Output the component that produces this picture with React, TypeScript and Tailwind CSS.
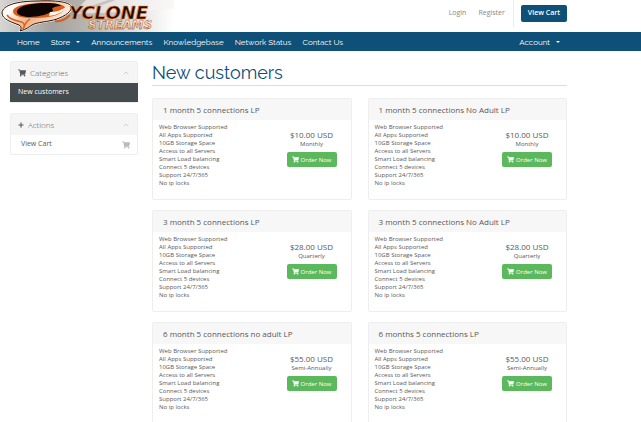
import { FaPlus, FaShoppingCart } from "react-icons/fa";
import { ChevronUp } from "lucide-react";

const features = [
  "Web Browser Supported",
  "All Apps Supported",
  "10GB Storage Space",
  "Access to all Servers",
  "Smart Load balancing",
  "Connect 5 devices",
  "Support 24/7/365",
  "No ip locks",
];

const products = [
  { name: "1 month 5 connections LP", price: "$10.00 USD", cycle: "Monthly" },
  { name: "1 month 5 connections No Adult LP", price: "$10.00 USD", cycle: "Monthly" },
  { name: "3 month 5 connections LP", price: "$28.00 USD", cycle: "Quarterly" },
  { name: "3 month 5 connections No Adult LP", price: "$28.00 USD", cycle: "Quarterly" },
  { name: "6 month 5 connections no adult LP", price: "$55.00 USD", cycle: "Semi-Annually" },
  { name: "6 months 5 connections LP", price: "$55.00 USD", cycle: "Semi-Annually" },
];

function Caret() {
  return <span className="ml-[6px] inline-block border-x-2 border-t-2 border-x-transparent border-t-white align-middle" />;
}

function Logo() {
  return (
    <svg viewBox="0 0 174 32" className="block h-8 w-[174px]" role="img" aria-label="Cyclone Streams">
      <defs>
        <linearGradient id="sky" x1="0" x2="1">
          <stop offset="0" stopColor="#d8d6d3" />
          <stop offset="0.3" stopColor="#a5a19d" />
          <stop offset="0.55" stopColor="#bdb9b5" />
          <stop offset="0.8" stopColor="#e6e4e2" />
          <stop offset="1" stopColor="#ffffff" />
        </linearGradient>
        <linearGradient id="fire" x1="0" x2="1" y1="0" y2="0.4">
          <stop offset="0" stopColor="#f7d9c2" />
          <stop offset="0.2" stopColor="#ffffff" />
          <stop offset="0.55" stopColor="#f3b083" />
          <stop offset="1" stopColor="#fff4ea" />
        </linearGradient>
        <linearGradient id="gold" x1="0" x2="0" y1="0" y2="1">
          <stop offset="0" stopColor="#fffdf8" />
          <stop offset="1" stopColor="#f0a45f" />
        </linearGradient>
      </defs>
      <rect width="174" height="32" fill="url(#sky)" />
      <path d="M86 0h88v9L100 13 72 14z" fill="#f6f4f2" opacity="0.65" />
      <path d="M108 0l8 0-42 15-6-1z" fill="#8f8a86" opacity="0.35" />
      <path
        d="M2 13C2 5 18 1 38 1c17-1 31 1 33 5 2 5-6 10-14 13-9 3-20 3-25 6-3 2-5 4-12 6 1-2 2-4-1-6C11 22 2 19 2 13z"
        fill="url(#fire)"
        stroke="#ffffff"
        strokeWidth="2"
      />
      <path
        d="M2 13C2 5 18 1 38 1c17-1 31 1 33 5 2 5-6 10-14 13-9 3-20 3-25 6-3 2-5 4-12 6 1-2 2-4-1-6C11 22 2 19 2 13z"
        fill="url(#fire)"
        stroke="#2b1208"
        strokeWidth="1"
      />
      <path d="M13 11c1-6 18-8 31-8 12 0 22 2 21 5-1 4-8 8-17 9-13 2-36 2-35-6z" fill="#d95c19" />
      <path d="M17 11c2-6 17-8 29-8 9 0 14 1 15 3-4 0-8 1-9 3 2 1 1 3-3 4-6 3-15 4-22 4-7-1-11-3-10-6z" fill="#0d0503" />
      <path d="M50 12c6 0 12-2 16-5-2 5-9 8-17 9z" fill="#fff6ee" />
      <path d="M7 15c3 5 10 6 15 7 3 2 3 4 1 7M30 19c-3 2-5 4-6 8" fill="none" stroke="#d95c19" strokeWidth="1.5" />
      <path d="M55 21c6 1 11-2 15-6" fill="none" stroke="#d95c19" strokeWidth="2" />
      <g fontFamily="DejaVu Sans" fontWeight="bold" fontStyle="italic">
        <text x="69" y="19" fontSize="18" fill="#1a0b05" stroke="#f08a43" strokeWidth="0.7">
          YCLONE
        </text>
        <text x="88" y="29" fontSize="12" fill="url(#gold)" stroke="#8a3b12" strokeWidth="0.4">
          STREAMS
        </text>
      </g>
    </svg>
  );
}

export default function App() {
  return (
    <div className="min-h-screen bg-white font-['Open_Sans',sans-serif] text-[#58595b]">
      <header className="flex h-8 items-start justify-between pr-[74px]">
        <a href="#home">
          <Logo />
        </a>
        <div className="flex items-center text-[7px] text-[#888]">
          <a href="#login" className="mr-3">Login</a>
          <a href="#register" className="mr-2">Register</a>
          <div className="border-l border-[#eee] py-[5px] pl-[7px]">
            <button className="block h-[17px] rounded-xs bg-[#0e5077] px-[7px] text-[7px] font-semibold text-white">
              View Cart
            </button>
          </div>
        </div>
      </header>

      <nav className="flex h-[19px] items-center gap-[11px] bg-[#0e5077] pr-[81px] pl-[17px] font-[Raleway,Lato,sans-serif] text-[8px] text-white">
        <a href="#home">Home</a>
        <a href="#store">Store<Caret /></a>
        <a href="#announcements">Announcements</a>
        <a href="#knowledgebase">Knowledgebase</a>
        <a href="#status">Network Status</a>
        <a href="#contact">Contact Us</a>
        <a href="#account" className="ml-auto">Account<Caret /></a>
      </nav>

      <div className="flex items-start gap-[14px] pt-[10px] pr-[74px] pl-[10px]">
        <aside className="flex w-[128px] shrink-0 flex-col gap-[10px]">
          <section className="rounded-xs border border-[#eee]">
            <h2 className="flex h-[21px] items-center bg-[#f5f5f5] px-[7px] text-[8px] font-light">
              <FaShoppingCart className="mr-1 size-2" />
              Categories
              <ChevronUp className="ml-auto size-2 text-[#bbb]" />
            </h2>
            <a href="#new" className="-mx-px flex h-[19px] items-center bg-[#434b4e] px-2 text-[7px] text-white">
              New customers
            </a>
          </section>
          <section className="rounded-xs border border-[#eee]">
            <h2 className="flex h-[21px] items-center bg-[#f5f5f5] px-[7px] text-[8px] font-light">
              <FaPlus className="mr-1 size-[6px]" />
              Actions
              <ChevronUp className="ml-auto size-2 text-[#bbb]" />
            </h2>
            <a href="#cart" className="flex h-[19px] items-center pr-[7px] pl-[10px] text-[7px]">
              View Cart
              <FaShoppingCart className="ml-auto size-2 text-[#bbb]" />
            </a>
          </section>
        </aside>

        <main className="min-w-0 flex-1">
          <h1 className="mb-3 h-[25px] border-b border-[#ddd] font-[Raleway,Lato,sans-serif] text-[18px] leading-[24px] text-[#0e5077]">
            New customers
          </h1>
          <div className="grid grid-cols-2 gap-x-4 gap-y-[10px]">
            {products.map((p) => (
              <article key={p.name} className="rounded-xs border border-[#eee]">
                <h3 className="h-[21px] bg-[#f7f7f7] px-[10px] text-[8px] leading-[21px]">{p.name}</h3>
                <div className="flex h-[79px] justify-between pt-[3px] pr-[14px] pl-[6px]">
                  <ul className="text-[6px] leading-[8px]">
                    {features.map((f) => (
                      <li key={f}>{f}</li>
                    ))}
                  </ul>
                  <div className="flex w-[50px] flex-col items-center pt-[6px] text-[6px] leading-[8px] whitespace-nowrap">
                    <span className="text-[8px] leading-[11px]">{p.price}</span>
                    <span>{p.cycle}</span>
                    <button className="mt-1 flex h-[15px] w-full items-center justify-center gap-0.5 rounded-xs bg-[#5cb85c] text-[6px] text-white">
                      <FaShoppingCart className="size-[7px]" />
                      Order Now
                    </button>
                  </div>
                </div>
              </article>
            ))}
          </div>
        </main>
      </div>
    </div>
  );
}
